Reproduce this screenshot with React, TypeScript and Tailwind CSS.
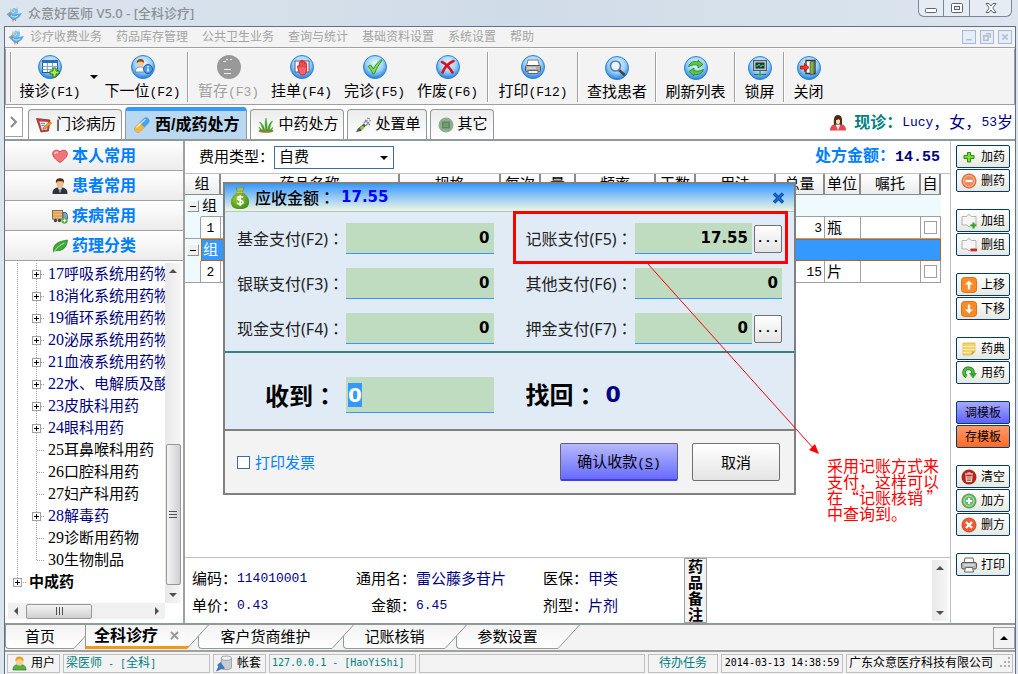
import { useState, type ReactNode } from 'react';
import clsx from 'clsx';

const MONO = "font-['Liberation_Mono','Noto_Sans_CJK_SC',monospace]";

const MENUS = ['诊疗收费业务', '药品库存管理', '公共卫生业务', '查询与统计', '基础资料设置', '系统设置', '帮助'];

type TreeItem = { no?: string; name: string; branch?: boolean; root?: boolean; last?: boolean };

const TREE: TreeItem[] = [
  { no: '17', name: '呼吸系统用药物', branch: true },
  { no: '18', name: '消化系统用药物', branch: true },
  { no: '19', name: '循环系统用药物', branch: true },
  { no: '20', name: '泌尿系统用药物', branch: true },
  { no: '21', name: '血液系统用药物', branch: true },
  { no: '22', name: '水、电解质及酸', branch: true },
  { no: '23', name: '皮肤科用药', branch: true },
  { no: '24', name: '眼科用药', branch: true },
  { no: '25', name: '耳鼻喉科用药' },
  { no: '26', name: '口腔科用药' },
  { no: '27', name: '妇产科用药' },
  { no: '28', name: '解毒药', branch: true },
  { no: '29', name: '诊断用药物' },
  { no: '30', name: '生物制品', last: true },
  { name: '中成药', branch: true, root: true },
];

/* ---------- icons ---------- */

function Svg({ size = 16, box = 16, children }: { size?: number; box?: number; children: ReactNode }) {
  return (
    <svg width={size} height={size} viewBox={`0 0 ${box} ${box}`} className="shrink-0" aria-hidden="true">
      {children}
    </svg>
  );
}

function Gradients() {
  return (
    <svg width="0" height="0" className="absolute" aria-hidden="true">
      <defs>
        <radialGradient id="ball" cx="0.5" cy="0.35" r="0.65">
          <stop offset="0" stopColor="#e8f6ff" />
          <stop offset="0.55" stopColor="#9fd2f8" />
          <stop offset="1" stopColor="#1f7fdc" />
        </radialGradient>
        <linearGradient id="tab" x1="0" y1="0" x2="0" y2="1">
          <stop offset="0" stopColor="#f3f3f3" />
          <stop offset="1" stopColor="#ffffff" />
        </linearGradient>
        <radialGradient id="green" cx="0.4" cy="0.4" r="0.7">
          <stop offset="0" stopColor="#9ccf3c" />
          <stop offset="1" stopColor="#3f8a12" />
        </radialGradient>
      </defs>
    </svg>
  );
}

const BirdIcon = () => (
  <Svg>
    <path d="M.5 8 4 6.500l1.500 1.500h5L16 7l-2.500 4-4.500 3H6.500L3.500 11z" fill="#58a9e4" />
    <circle cx="8" cy="4.800" r="4" fill="#7cc0ee" />
    <path d="M5 3.500C6 .8 9.500.5 10.500 2.500" stroke="#d7effc" strokeWidth="1.500" fill="none" />
    <circle cx="7" cy="5" r="1.600" fill="#fff" />
    <circle cx="7" cy="5" r=".7" fill="#234" />
    <path d="m2.500 6.300 4 .2-2 2z" fill="#ee7a2b" />
    <path d="M7 13v2.500M9.500 13v2" stroke="#ee7a2b" />
    <path d="M5 9.500c2 2 5 2 7 0" stroke="#dff2ff" fill="none" />
  </Svg>
);

function Ball({ children }: { children: ReactNode }) {
  return (
    <Svg size={24} box={24}>
      <circle cx="12" cy="12" r="11.500" fill="url(#ball)" stroke="#2b83d6" />
      {children}
    </Svg>
  );
}

const RegisterIcon = () => (
  <Ball>
    <rect x="4.500" y="5.500" width="15" height="12" fill="#fff" stroke="#23589c" />
    <path d="M4 5h16v3H4z" fill="#2f6cb8" />
    <path d="M4.500 11.500h15M4.500 14.500h15M9.500 8v9M14.500 8v9" stroke="#7ba5d6" />
    <path d="M15 13h3v3h3v3h-3v3h-3v-3h-3v-3h3z" fill="#a9f038" stroke="#287a0e" />
  </Ball>
);
const NextIcon = () => (
  <Ball>
    <path d="M4.500 17c0-4 2-5 5-5s4.500 1 4.500 5z" fill="#fff" stroke="#6a8db5" />
    <circle cx="9.500" cy="8" r="3.600" fill="#f3c89a" />
    <path d="M5.700 8c-.5-5 7.500-5.500 7.500-.5-2-.5-3-1-4-1-1 0-2 1-3.500 1.500z" fill="#8a4a13" />
    <circle cx="17" cy="14" r="4.500" fill="#4f9be4" stroke="#1b5fae" />
    <path d="M17 11v1.500M17 13.500v3" stroke="#fff" strokeWidth="1.500" />
  </Ball>
);
const HoldIcon = () => (
  <Svg size={24} box={24}>
    <circle cx="12" cy="12" r="12" fill="#999" />
    <path d="M7 14.500h7M7 18.500h7M6 6.500h2M9 4.500h2M13 4.500h2M8 6.500h1" stroke="#eee" />
  </Svg>
);
const HandIcon = () => (
  <Ball>
    <path d="M5 6h14v11H5z" fill="#fff" stroke="#54606e" />
    <path
      d="M9 17 7.500 12c-.3-1.500 1.300-1.800 1.800-.5V7.500c0-1.300 1.700-1.300 1.700 0V6c0-1.400 1.900-1.400 1.900 0v1c0-1.300 1.900-1.300 1.900 0v1.500c0-1.200 1.800-1.200 1.800 0V15c0 3-1.500 5-4 5-2 0-2.900-1.300-3.600-3z"
      fill="#f7646a"
      stroke="#d81f2c"
    />
    <path d="M11 7.500v5M12.900 7v5.500M14.800 8v5" stroke="#d81f2c" strokeWidth=".7" />
  </Ball>
);
const DoneIcon = () => (
  <Ball>
    <path d="m5 11.500 2.500-1.500 2.800 4C12 10.500 14.500 7.500 18.500 4.500l.5 1c-3 3.500-5.500 8-7.500 13H9.700C8.500 15.500 7 13.500 5 11.500z" fill="#7ee04c" stroke="#2b9420" />
  </Ball>
);
const VoidIcon = () => (
  <Ball>
    <path d="M6 7c3 1 8 6 10.500 10.500M17.500 6C13 8 8.500 12.500 6.500 17.500" stroke="#d8131b" strokeWidth="2.600" strokeLinecap="round" fill="none" />
  </Ball>
);
const PrintShape = () => (
  <>
    <path d="M7 5h10l1.500 6h-13z" fill="#fff" stroke="#777" />
    <rect x="4.500" y="10.500" width="15" height="6" rx="1" fill="#a9adb2" stroke="#555" />
    <path d="M7 15.500h10v3H7z" fill="#f4f4f4" stroke="#666" />
    <path d="M6 13h9" stroke="#eee" />
    <path d="M17 12.500h1.500" stroke="#ff9c2b" />
  </>
);
const FindIcon = () => (
  <Ball>
    <path d="m14 14 5 4.500" stroke="#444" strokeWidth="2.600" strokeLinecap="round" />
    <circle cx="10.500" cy="10" r="5" fill="#e9f6ff" stroke="#5a7fae" strokeWidth="1.700" />
  </Ball>
);
const RefreshIcon = () => (
  <Ball>
    <path d="M4.500 10.500C6 6 10 4.500 14 6V4l5 4.500-5 3.500v-2.500c-3-1.200-6-.7-9.500 1z" fill="#58c843" stroke="#237f1d" strokeWidth=".8" />
    <path d="M19.500 13.500c-1.500 4.500-5.500 6-9.500 4.500v2L5 15.500 10 12v2.500c3 1.200 6 .7 9.500-1z" fill="#58c843" stroke="#237f1d" strokeWidth=".8" />
  </Ball>
);
const LockIcon = () => (
  <Ball>
    <rect x="5.500" y="4.500" width="13" height="10" fill="#b9c0c4" stroke="#4d585f" />
    <path d="M7.500 6.500h9v6h-9z" fill="#173a33" />
    <path d="M8 10h2l1-2 2 3 1-2 2 .5" stroke="#58e39a" fill="none" strokeWidth=".8" />
    <path d="M12 15v2M6 18.500h12" stroke="#4d585f" />
    <circle cx="12" cy="18.300" r="1.600" fill="#2fb83a" />
  </Ball>
);
const ExitIcon = () => (
  <Ball>
    <path d="M9 4.500h9v13H9z" fill="#fff" stroke="#333" strokeWidth="1.300" />
    <path d="m13 6 4-1.200v13l-4 1.200z" fill="#7cb648" stroke="#333" strokeWidth=".6" />
    <path d="M3.500 10h4V7.500l4.500 4-4.500 4V13h-4z" fill="#f5391f" stroke="#a90e05" strokeWidth=".8" />
  </Ball>
);

const RecordIcon = () => (
  <Svg>
    <path d="M.5 1.500 14 3l-1.500 11-7.500 1z" fill="#d23b3b" stroke="#7e2020" strokeWidth=".7" />
    <path d="m3.500 4.500 8.500.5-1 7.500-5 .8z" fill="#dfeaf8" />
    <path d="M5 6.500h4M5.500 8.500h3" stroke="#6a8fc0" />
    <path d="m7.500 10.500 6.500-6 1.700 1.700-6.500 5.600-2.200.6z" fill="#f4a623" stroke="#95570c" strokeWidth=".6" />
  </Svg>
);
const PillIcon = () => (
  <Svg size={18} box={18}>
    <path d="M5 13 13 5" stroke="#4ba0ea" strokeWidth="7" strokeLinecap="round" />
    <path d="M5 13 9 9" stroke="#f6b63c" strokeWidth="7" />
    <circle cx="5" cy="13" r="3.500" fill="#f6b63c" />
    <path d="M4 11 12 3.500" stroke="#fff" strokeOpacity=".7" strokeWidth="1.500" strokeLinecap="round" />
  </Svg>
);
const GrassIcon = () => (
  <Svg>
    <ellipse cx="8" cy="14" rx="7.500" ry="1.800" fill="#a9713d" />
    <path d="M7 14C6 8 3.500 6 1.500 5 4 9 4.500 12 5 14zM8 14c-1.500-5-1-10 0-13 1 4 1.500 9 1 13zM9.500 14c.5-5 2.500-9 5-10-2 3-2.500 7-3 10zM4 14c-.5-2-1.500-3-3-4 1 2 1 3 1.500 4zM12 14c.5-2 1.500-3 3-3.500-1 1.500-1 2.500-1 3.500z" fill="#43a32f" stroke="#43a32f" strokeWidth=".5" />
  </Svg>
);
const SyringeIcon = () => (
  <Svg>
    <path d="m1 15 2-3.500 6-5 2 2-5 5.500z" fill="#4c5357" />
    <path d="m4.500 11 3-2.500 2 1.800-3 2.700z" fill="#7fd42c" />
    <path d="m8.500 6 4-3M11 8.500l3-3.500M10 3l5 5M12 1l3 1M14 4l2-.5" stroke="#8b9094" strokeWidth="1.200" />
  </Svg>
);
const OtherIcon = () => (
  <Svg>
    <circle cx="8" cy="8" r="7.500" fill="#8fae90" />
    <rect x="4" y="4.500" width="8" height="7" fill="#5c8a5e" />
    <rect x="5.500" y="6" width="5" height="4" fill="#6f9c70" />
  </Svg>
);
const WomanIcon = () => (
  <Svg>
    <path d="M0 15.500c0-5 3-6 5.500-6.500h5c2.500.5 5.500 1.500 5.500 6.500z" fill="#e8474f" />
    <path d="m5.500 9 2.500 6.500L10.500 9z" fill="#d9eefb" />
    <path d="M4 10C3.500 4 4 0 8 0s4.500 4 4 10l-2-.5h-4z" fill="#4b2c15" />
    <path d="M6 5c1 .2 2-.5 2.500-1 .5.600 1 1 1.500 1v2.500c-.5 2-3.500 2-4 0z" fill="#fbd9b5" />
  </Svg>
);

const HeartIcon = () => (
  <Svg>
    <path d="M8 14.500C3 11 .5 8.500.7 5.500.9 2 5.500 1 8 4c2.500-3 7.100-2 7.300 1.500.2 3-2.300 5.500-7.300 9z" fill="#f4747a" stroke="#d2494f" />
    <path d="M3 6c0-1.500 1.500-2.200 3-1.500" stroke="#ffd4d4" strokeWidth="1.500" fill="none" />
  </Svg>
);
const ManIcon = () => (
  <Svg>
    <path d="M.5 16c0-5 2-5.500 5-6.500h5c3 1 5 1.500 5 6.500z" fill="#2f3338" />
    <path d="m6 9.500 2 5.500 2-5.500z" fill="#fff" />
    <path d="M8 10.500 7.200 12l.8 3 .8-3z" fill="#3a76c8" />
    <ellipse cx="8" cy="5.500" rx="3.500" ry="4.200" fill="#f0bd85" />
    <path d="M4 5.500C3.500 1 5.500.3 8 .3s4.500.7 4 5.200c-.8-1.500-1-2-2-2.200H6c-1 .2-1.300.8-2 2.200z" fill="#45301d" />
  </Svg>
);
const TruckIcon = () => (
  <Svg>
    <rect x=".5" y="2.500" width="10" height="8.500" fill="#f1bd7a" stroke="#8a6a45" />
    <path d="M1 5h9M1 8h9" stroke="#d8893a" />
    <path d="M11 4.500h3l1.500 3V11H11z" fill="#7aa7d8" stroke="#4a6a91" />
    <circle cx="3.500" cy="12.500" r="1.700" fill="#444" />
    <circle cx="7.500" cy="12.500" r="1.700" fill="#444" />
    <circle cx="12.500" cy="12.500" r="3.200" fill="#58ae42" />
    <path d="M12.500 10.700v3.600M10.700 12.500h3.600" stroke="#fff" strokeWidth="1.200" />
  </Svg>
);
const LeafIcon = () => (
  <Svg>
    <path d="M1.500 14C.5 7 5 3.500 15.500 2c-.5 7-4.500 11.500-11.500 10.500z" fill="#3faa3a" stroke="#1e7b24" strokeWidth=".7" />
    <path d="M1.500 14.500C4.500 10 8 7 12.500 5" stroke="#b7eaa0" fill="none" />
  </Svg>
);

const PlusIcon = () => (
  <Svg>
    <path d="M6.500 3.500h3v3h3.500v3H9.500v3.500h-3V9.500H3v-3h3.500z" fill="#7be02a" stroke="#2a8a16" />
  </Svg>
);
const MinusBall = () => (
  <Svg>
    <circle cx="8" cy="8" r="7" fill="#f08a5a" stroke="#d4592a" />
    <circle cx="8" cy="8" r="5.500" fill="none" stroke="#f9b995" />
    <path d="M4.500 8h7" stroke="#fff" strokeWidth="2.200" />
  </Svg>
);
const BoxShape = () => (
  <path d="M1 3.500h4.500L8 1.500l2.500 2H15v8.500h-5L8 14l-2-2H1z" fill="#f5f5f3" stroke="#b3b3b0" />
);
const GroupAdd = () => (
  <Svg>
    <BoxShape />
    <path d="M12.500 9.500v6M9.500 12.500h6" stroke="#2da52b" strokeWidth="2.200" />
  </Svg>
);
const GroupDel = () => (
  <Svg>
    <BoxShape />
    <path d="M9.500 13h6.500" stroke="#d61f33" strokeWidth="2.600" />
  </Svg>
);
function ArrowBox({ down }: { down?: boolean }) {
  return (
    <Svg>
      <rect x=".5" y=".5" width="15" height="15" rx="3" fill="#f98a26" stroke="#e0701a" />
      <path d={down ? 'M8 12.500 4 8.500h2.800v-5h2.400v5H12z' : 'M8 3.500l4 4H9.200v5H6.800v-5H4z'} fill="#fff" />
    </Svg>
  );
}
const NoteIcon = () => (
  <Svg>
    <path d="M2 2h12v8.500L10.500 14H2z" fill="#f3d46a" stroke="#d6b140" strokeWidth=".7" />
    <path d="M2 5.500h12M2 8.500h12M2 11.500h9" stroke="#fbeeb0" />
    <path d="M14 10.500h-3.500V14z" fill="#c79f34" />
  </Svg>
);
const UseIcon = () => (
  <Svg>
    <path d="M5.500 11.500C1.500 9 2.500 3.500 7.500 3.300c3 0 4.700 2 4.500 5.200" fill="none" stroke="#1b7d1b" strokeWidth="3.600" />
    <path d="M5.500 11.500C1.500 9 2.500 3.500 7.500 3.300c3 0 4.700 2 4.500 5.200" fill="none" stroke="#4cc340" strokeWidth="2" />
    <path d="M8 8h8l-4 5.500z" fill="#31a52d" />
  </Svg>
);
const TrashIcon = () => (
  <Svg>
    <circle cx="8" cy="8" r="7.500" fill="#b32517" />
    <path d="M4 5h8M6.500 4h3M5 6.500l.5 6h5l.5-6M7 7v4.500M9 7v4.500" stroke="#fff" fill="none" />
  </Svg>
);
const AddBall = () => (
  <Svg>
    <circle cx="8" cy="8" r="7" fill="#6cb96a" stroke="#4a974b" />
    <circle cx="8" cy="8" r="5" fill="none" stroke="#b9e2b4" />
    <path d="M8 5v6M5 8h6" stroke="#fff" strokeWidth="2" />
  </Svg>
);
const DelBall = () => (
  <Svg>
    <circle cx="8" cy="8" r="7" fill="#ee5a33" stroke="#d64420" />
    <path d="m5 5 6 6M11 5l-6 6" stroke="#fff" strokeWidth="2.400" />
  </Svg>
);
const PrinterIcon = () => (
  <Svg>
    <path d="M4 1h8l1 5H3z" fill="#fff" stroke="#666" />
    <rect x=".5" y="5.500" width="15" height="6.500" rx="1.500" fill="#b4b6b9" stroke="#555" />
    <path d="M2.500 8h11" stroke="#eee" />
    <path d="M4.500 10.500h7l1 4.500h-9z" fill="#fafafa" stroke="#666" />
  </Svg>
);
const UserIcon = () => (
  <Svg size={15}>
    <path d="M1 15c0-4 2-6 7-6s7 2 7 6z" fill="#58b13c" stroke="#347a20" strokeWidth=".7" />
    <circle cx="8" cy="6" r="4" fill="#f8cf9c" />
    <path d="M3.800 6C3 1 6 .5 8 .5S13 1 12.200 6C11 4 9 3.500 8 3.500S5 4 3.800 6z" fill="#eaa325" />
  </Svg>
);
const DatabaseIcon = () => (
  <Svg size={17}>
    <path d="M5 3v9c0 2.500 9.500 2.500 9.500 0V3z" fill="#c9cdd1" stroke="#858b91" strokeWidth=".7" />
    <ellipse cx="9.700" cy="3" rx="4.800" ry="2" fill="#eef0f2" stroke="#858b91" strokeWidth=".7" />
    <path d="m.5 15 2-4-1-1.500L4 7l4 5.500-3 .5z" fill="#3a7bd0" stroke="#1e4f97" strokeWidth=".5" />
  </Svg>
);
const MoneyBagIcon = () => (
  <Svg size={26} box={26}>
    <path d="M9 3c2 1 3-1 4-1s2 1.500 4 .5L15.500 7h-5z" fill="#9cc45a" stroke="#5d8f25" strokeWidth=".6" />
    <path d="M10.500 7h5c4 3 7 6 6.500 11-.4 4.500-4 6-9 6s-8.600-1.500-9-6c-.4-5 2.500-8 6.500-11z" fill="url(#green)" />
    <path d="M16 12.500c-1-1.300-5.500-1.500-5.500.8 0 2.500 5.500 1.200 5.500 3.900 0 2.300-4.500 2.300-6 .8M13.200 10v11" stroke="#fff" strokeWidth="1.500" fill="none" />
    <path d="M10 7.500h6" stroke="#e3b74b" strokeWidth="1.200" />
  </Svg>
);

function Triangle({ dir, dark }: { dir: 'up' | 'down' | 'left' | 'right'; dark?: boolean }) {
  const paths = { up: 'M0 6 4 2l4 4z', down: 'M0 2h8L4 6z', left: 'M6 0v8L2 4z', right: 'M2 0v8l4-4z' };
  return (
    <Svg size={8} box={8}>
      <path d={paths[dir]} fill={dark ? '#000' : '#505050'} />
    </Svg>
  );
}

/* ---------- window chrome ---------- */

function TitleBar() {
  return (
    <header className="flex h-[26px] shrink-0 items-start justify-between bg-linear-to-r from-[#dce5ee] via-[#cfdbe7] to-[#dde6ef] pr-1.5 pl-1.5">
      <h1 className="flex h-[28px] items-center gap-1.5 font-['Noto_Sans','Noto_Sans_CJK_SC',sans-serif] text-[13px] font-medium text-[#8b9096]">
        <BirdIcon />
        众意好医师 V5.0 - [全科诊疗]
      </h1>
      <div className="flex h-[17px] overflow-hidden rounded-b-md border border-t-0 border-[#7c8794] bg-[#e6ecf3]">
        <button type="button" aria-label="最小化" className="flex w-[25px] items-center justify-center border-r border-[#7c8794]">
          <svg width="12" height="12" viewBox="0 0 12 12"><rect x=".5" y="6.500" width="11" height="4" rx="1" fill="#fff" stroke="#5b6370" /></svg>
        </button>
        <button type="button" aria-label="还原" className="flex w-[26px] items-center justify-center border-r border-[#7c8794]">
          <svg width="12" height="12" viewBox="0 0 12 12"><rect x=".5" y="1.500" width="11" height="9" rx="1" fill="#fff" stroke="#5b6370" /><rect x="3.500" y="4.500" width="5" height="3" fill="#dfe5ec" stroke="#5b6370" /></svg>
        </button>
        <button type="button" aria-label="关闭窗口" className="flex w-[41px] items-center justify-center">
          <svg width="12" height="12" viewBox="0 0 12 12"><path d="M1 1.500h3L6 4l2-2.500h3L7.800 6l3.200 4.500H8L6 8l-2 2.500H1L4.200 6z" fill="#fff" stroke="#5b6370" /></svg>
        </button>
      </div>
    </header>
  );
}

function MenuBar() {
  return (
    <nav className="flex h-[22px] shrink-0 items-center justify-between border-t border-b border-t-[#5f7288] border-b-[#a0a0a0] bg-[#f3f3f3] px-[3px]">
      <div className="flex items-center gap-3.5 text-xs leading-5 text-[#a3a3a3]">
        <span className="-mr-2"><BirdIcon /></span>
        {MENUS.map(m => (
          <button key={m} type="button">{m}</button>
        ))}
      </div>
      <div className="flex gap-1">
        {['M4 9h5', 'M5.500 3.500h4v4M3.500 5.500h4v4h-4z', 'm4 4 5 5M9 4 4 9'].map((d, i) => (
          <button key={d} type="button" aria-label={['最小化子窗口', '还原子窗口', '关闭子窗口'][i]}>
            <svg width="14" height="14" viewBox="0 0 13 13"><rect x=".5" y=".5" width="12" height="12" fill="#e6eefa" stroke="#a9b9d6" /><path d={d} stroke="#b3bfd3" strokeWidth="1.500" fill="none" /></svg>
          </button>
        ))}
      </div>
    </nav>
  );
}

function Tool({ label, fkey, width, disabled, children }: { label: string; fkey?: string; width: string; disabled?: boolean; children: ReactNode }) {
  return (
    <button
      type="button"
      disabled={disabled}
      className={clsx('flex shrink-0 flex-col items-center gap-0.5 pt-1 text-[15px] leading-5 whitespace-nowrap', width, disabled ? 'text-[#a0a0a0]' : 'text-black')}
    >
      {children}
      <span>
        {label}
        {fkey && <span className={clsx(MONO, 'text-[13px]')}>({fkey})</span>}
      </span>
    </button>
  );
}

const Sep = () => <span className="mx-[3px] h-[50px] w-0.5 shrink-0 border-l border-[#a0a0a0] bg-white" />;

function Toolbar() {
  return (
    <div className="flex h-[57px] shrink-0 items-center border border-t-white border-[#a0a0a0] bg-[#f3f3f3]">
      <span className="mr-px ml-1 h-[50px] w-0.5 border-l border-[#a0a0a0] bg-white" />
      <Tool label="接诊" fkey="F1" width="w-[74px]"><RegisterIcon /></Tool>
      <button type="button" aria-label="更多接诊" className="flex w-3.5 justify-center"><Triangle dir="down" dark /></button>
      <Tool label="下一位" fkey="F2" width="w-[83px]"><NextIcon /></Tool>
      <Sep />
      <Tool label="暂存" fkey="F3" width="w-[73px]" disabled><HoldIcon /></Tool>
      <Tool label="挂单" fkey="F4" width="w-[73px]"><HandIcon /></Tool>
      <Tool label="完诊" fkey="F5" width="w-[73px]"><DoneIcon /></Tool>
      <Tool label="作废" fkey="F6" width="w-[73px]"><VoidIcon /></Tool>
      <Sep />
      <Tool label="打印" fkey="F12" width="w-[82px]"><Ball><PrintShape /></Ball></Tool>
      <Sep />
      <Tool label="查找患者" width="w-[70px]"><FindIcon /></Tool>
      <Sep />
      <Tool label="刷新列表" width="w-[71px]"><RefreshIcon /></Tool>
      <Sep />
      <Tool label="锁屏" width="w-[41px]"><LockIcon /></Tool>
      <Sep />
      <Tool label="关闭" width="w-[41px]"><ExitIcon /></Tool>
    </div>
  );
}

function ChartTabs() {
  const [active, setActive] = useState('西/成药处方');
  const tabs = [
    { name: '门诊病历', icon: <RecordIcon /> },
    { name: '西/成药处方', icon: <PillIcon /> },
    { name: '中药处方', icon: <GrassIcon /> },
    { name: '处置单', icon: <SyringeIcon /> },
    { name: '其它', icon: <OtherIcon /> },
  ];
  return (
    <div className="flex h-9 shrink-0 items-end justify-between border-b-2 border-[#8f9a99] bg-white">
      <div className="flex items-end gap-[3px]">
        <button type="button" aria-label="展开" className="mr-0.5 mb-0.5 flex h-[30px] w-[18px] items-center justify-center border border-[#a0a0a0] border-l-white">
          <svg width="8" height="12" viewBox="0 0 8 12"><path d="m1 1 5 5-5 5" fill="none" stroke="#8a8a8a" strokeWidth="2" /></svg>
        </button>
        {tabs.map(t => (
          <button
            key={t.name}
            type="button"
            onClick={() => setActive(t.name)}
            className={clsx(
              'flex items-center gap-1 rounded-t border border-b-0 border-[#8f9a99] whitespace-nowrap',
              t.name === active
                ? 'h-8 border-t-4 border-t-[#3399ff] bg-[#bad8f0] px-[7px] text-base leading-5 font-bold'
                : 'h-[30px] bg-linear-to-b from-[#ececec] to-white pr-[5px] pl-[7px] text-[15px]',
            )}
          >
            {t.icon}
            <span>{t.name}</span>
          </button>
        ))}
      </div>
      <p className="flex h-8 items-center pr-0.5 text-base leading-5 text-[#000080]">
        <WomanIcon />
        <b className="ml-2 text-[#008080]">现诊：</b>
        <span className={clsx(MONO, 'text-[13px]')}>Lucy</span>，女，<span className={clsx(MONO, 'text-[13px]')}>53</span>岁
      </p>
    </div>
  );
}

/* ---------- left panel ---------- */

function TreeLines({ item }: { item: TreeItem }) {
  const x = item.root ? 4.5 : 23.5;
  return (
    <svg width="32" height="22" viewBox="0 0 32 22" className="shrink-0" aria-hidden="true">
      <g stroke="#a0a0a0" strokeDasharray="1 1" fill="none">
        <path d={item.root ? 'M4.500 0v11' : 'M4.500 0v22'} />
        {!item.root && <path d={item.last ? 'M23.500 0v11' : 'M23.500 0v22'} />}
        <path d={item.root ? 'M4 11.500h9' : 'M24 11.500h8'} />
      </g>
      {item.branch && (
        <>
          <rect x={x - 4} y="7.500" width="8" height="8" fill="#fff" stroke="#a0a0a0" />
          <path d={`M${x - 2.5} 11.500h5M${x} 9v5`} stroke="#000" />
        </>
      )}
    </svg>
  );
}

const PANEL_TABS = [
  { name: '本人常用', icon: <HeartIcon /> },
  { name: '患者常用', icon: <ManIcon /> },
  { name: '疾病常用', icon: <TruckIcon /> },
  { name: '药理分类', icon: <LeafIcon /> },
];

function SidePanel() {
  return (
    <aside className="flex w-[180px] shrink-0 flex-col border-r-2 border-[#a0a0a0] bg-white">
      {PANEL_TABS.map(p => (
        <button
          key={p.name}
          type="button"
          className="flex h-[30px] shrink-0 items-center justify-center gap-1 border-b border-[#a0a0a0] bg-linear-to-b from-white to-[#ececec] text-base leading-5 font-bold text-[#0080ff]"
        >
          {p.icon}
          {p.name}
        </button>
      ))}
      <div className="flex min-h-0 flex-1 pt-0.5 pb-1 pl-[3px]">
        <div className="flex min-w-0 flex-1 flex-col">
          <ul className="min-h-0 flex-1 overflow-hidden pl-[5px] text-[15px]">
            {TREE.map(t => (
              <li key={t.name} className={clsx('flex h-[22px] items-center whitespace-nowrap', t.branch && !t.root ? 'text-[#000080]' : 'text-black')}>
                <TreeLines item={t} />
                {t.root ? (
                  <b className="-ml-4">{t.name}</b>
                ) : (
                  <span className="pl-[3px]">
                    <span className="font-['Liberation_Serif',serif] text-base leading-5">{t.no}</span>
                    {t.name}
                  </span>
                )}
              </li>
            ))}
          </ul>
          <div className="flex h-4 shrink-0 items-center gap-1.5 bg-[#f0f0f0] px-1">
            <Triangle dir="left" />
            <span className="flex h-[15px] w-[66px] items-center justify-center gap-0.5 rounded-xs border border-[#979797] bg-linear-to-b from-[#f4f4f4] to-[#d0d0d0]">
              <i className="h-2 w-px bg-[#505050]" />
              <i className="h-2 w-px bg-[#505050]" />
              <i className="h-2 w-px bg-[#505050]" />
            </span>
            <span className="flex-1" />
            <Triangle dir="right" />
          </div>
        </div>
        <div className="mr-0.5 mb-4 flex w-4 flex-col items-center justify-between bg-linear-to-r from-[#e8e8e8] to-[#f6f6f6] py-1">
          <Triangle dir="up" />
          <span className="flex-1" />
          <span className="mb-1.5 flex h-[141px] w-[15px] flex-col items-center justify-center gap-0.5 rounded-xs border border-[#979797] bg-linear-to-r from-[#f4f4f4] to-[#d0d0d4]">
            <i className="h-px w-2 bg-[#505050]" />
            <i className="h-px w-2 bg-[#505050]" />
            <i className="h-px w-2 bg-[#505050]" />
          </span>
          <Triangle dir="down" />
        </div>
      </div>
    </aside>
  );
}

/* ---------- prescription ---------- */

const HEADERS = ['药品名称', '规格', '每次', '量', '频率', '天数', '用法', '总量', '单位', '嘱托', '自'];

function Collapse() {
  return (
    <button type="button" aria-label="折叠" className="mx-auto flex h-3 w-3 items-center justify-center border border-[#909090] border-t-white border-l-white bg-[#f0f0f0]">
      <i className="h-px w-1.5 bg-black" />
    </button>
  );
}

function PrescriptionTable() {
  const groups = [
    { no: 1, total: 3, unit: '瓶', selected: false },
    { no: 2, total: 15, unit: '片', selected: true },
  ];
  const line = 'border-r border-b border-[#a0a0a0]';
  return (
    <table className="w-[756px] table-fixed border-separate border-spacing-0 text-[15px] leading-4">
      <colgroup>
        <col className="w-4" />
        <col className="w-5" />
        <col className="w-[179px]" />
        <col className="w-[101px]" />
        <col className="w-10" />
        <col className="w-[35px]" />
        <col className="w-20" />
        <col className="w-10" />
        <col className="w-20" />
        <col className="w-[49px]" />
        <col className="w-9" />
        <col className="w-[60px]" />
        <col className="w-5" />
      </colgroup>
      <thead>
        <tr className="bg-linear-to-b from-white to-[#ebebeb]">
          <th colSpan={2} className="h-[21px] border-r-2 border-b border-[#8a8a8a] p-0 font-normal">组</th>
          {HEADERS.map(h => (
            <th key={h} className="h-[21px] border-r-2 border-b border-[#8a8a8a] p-0 font-normal whitespace-nowrap">{h}</th>
          ))}
        </tr>
      </thead>
      {groups.map(g => (
        <tbody key={g.no}>
          <tr>
            <td className="h-[22px] bg-[#effaff] p-0"><Collapse /></td>
            <td
              colSpan={12}
              className={clsx('h-[22px] p-0 pl-px', g.selected ? 'border border-[#b5651d] bg-[#3399ff] text-white' : 'border-b border-[#a0a0a0] bg-[#effaff]')}
            >
              组
            </td>
          </tr>
          <tr>
            <td className={clsx('h-[22px] bg-[#effaff] p-0', line)} />
            <td className={clsx('p-0 text-center', line)}>
              <span className={clsx(MONO, 'text-[13px]')}>{g.no}</span>
            </td>
            {HEADERS.slice(0, 7).map(h => (
              <td key={h} className={clsx('p-0', line)} />
            ))}
            <td className={clsx('p-0 pr-0.5 text-right', line)}>
              <span className={clsx(MONO, 'text-[13px]')}>{g.total}</span>
            </td>
            <td className={clsx('p-0 pl-0.5', line)}>{g.unit}</td>
            <td className={clsx('p-0', line)} />
            <td className={clsx('p-0', line)}>
              <input type="checkbox" aria-label="自备" className="mx-auto block h-[13px] w-[13px] appearance-none border border-[#a0a0a0]" />
            </td>
          </tr>
        </tbody>
      ))}
    </table>
  );
}

function Detail({ label, value, latin }: { label: string; value: string; latin?: boolean }) {
  return (
    <>
      <dt className="flex justify-end whitespace-nowrap">{label}：</dt>
      <dd className={clsx('whitespace-nowrap text-[#000080]', latin && clsx(MONO, 'text-[13px]'))}>{value}</dd>
    </>
  );
}

function DrugDetails() {
  return (
    <div className="flex h-[66px] shrink-0 border-t border-[#c0c0c0] bg-white">
      <dl className="grid w-[499px] shrink-0 grid-cols-[45px_119px_60px_127px_45px_1fr] grid-rows-[27px_27px] items-center pt-[7px] pl-[7px] text-[15px] leading-5">
        <Detail label="编码" value="114010001" latin />
        <Detail label="通用名" value="雷公藤多苷片" />
        <Detail label="医保" value="甲类" />
        <Detail label="单价" value="0.43" latin />
        <Detail label="金额" value="6.45" latin />
        <Detail label="剂型" value="片剂" />
      </dl>
      <label htmlFor="remark" className="w-[23px] shrink-0 border border-[#a0a0a0] bg-[#f3f3f3] px-[3px] text-[15px] leading-4 font-bold">
        药品备注
      </label>
      <textarea id="remark" className="min-w-0 flex-1 resize-none outline-none" />
      <div className="m-0.5 flex w-4 flex-col items-center justify-between bg-linear-to-r from-[#e8e8e8] to-[#f6f6f6] py-1">
        <Triangle dir="up" />
        <Triangle dir="down" />
      </div>
    </div>
  );
}

/* ---------- payment dialog ---------- */

const DIALOG_FONT = "font-['Noto_Sans','Noto_Sans_CJK_SC',sans-serif]";
const NUMBER_FONT = "font-['DejaVu_Sans',sans-serif]";

// the TC face centres the full-width colon
const Colon = () => <span className="font-['Noto_Sans_CJK_TC',sans-serif]">：</span>;

function PayField({ id, label, fkey, value, more }: { id: string; label: string; fkey: string; value: string; more?: boolean }) {
  return (
    <div className="flex h-[31px] items-center">
      <label htmlFor={id} className="w-[109px] shrink-0 text-base leading-6 whitespace-nowrap text-[#222]">
        {label}({fkey})<Colon />
      </label>
      <input
        id={id}
        defaultValue={value}
        className={clsx(NUMBER_FONT, 'h-[31px] min-w-0 flex-1 border-b border-[#3399ff] bg-[#c0dcc0] px-1 text-right text-[15px] font-bold outline-none')}
      />
      {more && (
        <button
          type="button"
          aria-label={`${label}明细`}
          className={clsx(MONO, 'ml-0.5 flex h-7 w-7 shrink-0 items-center justify-center rounded-xs border border-[#707070] bg-linear-to-b from-white to-[#e4e4e4] text-[13px] font-bold')}
        >
          ...
        </button>
      )}
    </div>
  );
}

function PaymentDialog() {
  return (
    <section role="dialog" aria-label="应收金额" className={clsx(DIALOG_FONT, 'absolute top-[41px] left-[38px] w-[573px] border-2 border-[#808080] bg-[#e1ebf6]')}>
      <div className="flex h-7 items-center border-b border-[#b8c4c4] bg-linear-to-b from-[#3399ff] to-[#eef6e0] pr-2 pl-0.5">
        <MoneyBagIcon />
        <h2 className="ml-0.5 text-base leading-6 font-medium">应收金额<Colon /></h2>
        <output className={clsx(NUMBER_FONT, 'ml-1.5 text-[15px] font-bold text-[#0000ff]')}>17.55</output>
        <button type="button" aria-label="关闭" className="ml-auto">
          <svg width="15" height="12" viewBox="0 0 15 12"><path d="m3 1.500 9 9M12 1.500l-9 9" stroke="#0a4fa8" strokeWidth="3.400" /><path d="m3 1.500 9 9M12 1.500l-9 9" stroke="#0e6fdc" strokeWidth="1.500" /></svg>
        </button>
      </div>
      <div className="grid grid-cols-2 gap-x-8 gap-y-3.5 border-b-2 border-[#3d8080] px-3 pt-[11px] pb-[7px]">
        <PayField id="fund" label="基金支付" fkey="F2" value="0" />
        <PayField id="account" label="记账支付" fkey="F5" value="17.55" more />
        <PayField id="bank" label="银联支付" fkey="F3" value="0" />
        <PayField id="other" label="其他支付" fkey="F6" value="0" />
        <PayField id="cash" label="现金支付" fkey="F4" value="0" />
        <PayField id="deposit" label="押金支付" fkey="F7" value="0" more />
      </div>
      <div className="grid h-[78px] grid-cols-2 items-center gap-x-8 border-b-2 border-[#808080] px-3 pt-3 pb-1 text-2xl font-bold">
        <div className="flex items-center">
          <label htmlFor="received" className="w-[109px] shrink-0 pl-7 whitespace-nowrap">收到<Colon /></label>
          <input
            id="received"
            defaultValue="0"
            autoFocus
            onFocus={e => e.currentTarget.select()}
            className={clsx(NUMBER_FONT, 'h-9 min-w-0 flex-1 border-b border-[#3399ff] bg-[#c0dcc0] px-0.5 text-xl leading-7 outline-none selection:bg-[#3399ff] selection:text-white')}
          />
        </div>
        <div className="flex items-center">
          找回<Colon />
          <output className={clsx(NUMBER_FONT, 'ml-2 text-[22px] text-[#000080]')}>0</output>
        </div>
      </div>
      <div className="flex h-[62px] items-center bg-[#f3f3f3] pr-3.5 pl-3 text-[15px]">
        <label className="flex items-center gap-[5px] text-[#0080ff]">
          <input type="checkbox" className="h-[13px] w-[13px] appearance-none border border-[#3a6ea5] bg-white" />
          打印发票
        </label>
        <button type="submit" className="ml-auto h-[38px] w-[118px] rounded-xs border border-b-2 border-[#606080] border-b-[#4040e0] bg-linear-to-b from-[#b8b8ff] to-[#6a6aff]">
          确认收款<span className={clsx(MONO, 'text-[13px]')}>(<u>S</u>)</span>
        </button>
        <button type="button" className="ml-3.5 h-[38px] w-[88px] rounded-xs border border-[#707070] bg-linear-to-b from-white to-[#e4e4e4]">
          取消
        </button>
      </div>
    </section>
  );
}

/* call-out for the on-account payment row */
function Callout() {
  return (
    <>
      <span className="pointer-events-none absolute top-[70px] left-[328px] h-[53px] w-[275px] border-3 border-[#ff0000]" />
      <svg width="172" height="191" viewBox="0 0 172 191" className="pointer-events-none absolute top-[123px] left-[463px]" aria-hidden="true">
        <path d="m0 0 166 185" stroke="#f00" fill="none" />
        <path d="m171 190-10-4 6-6z" fill="#f00" />
      </svg>
      <p className="absolute top-[316px] left-[642px] w-28 font-['Noto_Sans_CJK_SC',sans-serif] text-base leading-4 whitespace-nowrap text-[#ff0000]">
        采用记账方式来
        <br />
        支付，这样可以
        <br />
        在“记账核销 ”
        <br />
        中查询到。
      </p>
    </>
  );
}

function Prescription() {
  return (
    <main className="relative flex min-w-0 flex-1 flex-col border-r border-[#c0c0c0] bg-white">
      <div className="flex h-[33px] shrink-0 items-center border-b border-[#c0c0c0] pr-2.5 pl-3.5 text-[15px]">
        <label htmlFor="fee" className="whitespace-nowrap">费用类型：</label>
        <div className="relative">
          <select id="fee" className="h-[23px] w-[120px] appearance-none border border-[#3a6ea5] bg-white px-1 leading-5">
            <option>自费</option>
          </select>
          <span className="pointer-events-none absolute top-2 right-1.5"><Triangle dir="down" dark /></span>
        </div>
        <p className="ml-auto text-base leading-5 font-bold text-[#0080ff]">
          处方金额：<span className={clsx(MONO, 'text-[15px] text-[#000080]')}>14.55</span>
        </p>
      </div>
      <div className="min-h-0 flex-1 overflow-hidden">
        <PrescriptionTable />
      </div>
      <DrugDetails />
      <PaymentDialog />
      <Callout />
    </main>
  );
}

/* ---------- right actions ---------- */

const ACTIONS: { name: string; icon?: ReactNode; look?: string }[][] = [
  [
    { name: '加药', icon: <PlusIcon /> },
    { name: '删药', icon: <MinusBall /> },
  ],
  [
    { name: '加组', icon: <GroupAdd /> },
    { name: '删组', icon: <GroupDel /> },
  ],
  [
    { name: '上移', icon: <ArrowBox /> },
    { name: '下移', icon: <ArrowBox down /> },
  ],
  [
    { name: '药典', icon: <NoteIcon /> },
    { name: '用药', icon: <UseIcon /> },
  ],
  [
    { name: '调模板', look: 'from-[#a8a8ff] to-[#6060ff]' },
    { name: '存模板', look: 'from-[#ff9a68] to-[#ff6a20]' },
  ],
  [
    { name: '清空', icon: <TrashIcon /> },
    { name: '加方', icon: <AddBall /> },
    { name: '删方', icon: <DelBall /> },
  ],
  [{ name: '打印', icon: <PrinterIcon /> }],
];

function ActionRail() {
  return (
    <aside className="flex w-16 shrink-0 flex-col gap-[17px] bg-white pt-1 pl-[5px]">
      {ACTIONS.map(group => (
        <div key={group[0].name} className="flex flex-col gap-px">
          {group.map(a => (
            <button
              key={a.name}
              type="button"
              className={clsx(
                'flex h-[23px] w-[54px] items-center justify-center gap-1 rounded-xs border border-[#003c74] bg-linear-to-b text-xs leading-4',
                a.look ?? 'from-white to-[#e8e8e2]',
              )}
            >
              {a.icon}
              {a.name}
            </button>
          ))}
        </div>
      ))}
    </aside>
  );
}

/* ---------- bottom ---------- */

function PageTab({ name, width, layer, active }: { name: string; width: string; layer: string; active?: boolean }) {
  return (
    <div className={clsx('relative -mr-[11px] flex h-6', layer)}>
      <button
        type="button"
        className={clsx(
          'flex items-center border-l border-[#8f9a99] bg-linear-to-b from-[#f3f3f3] to-white leading-5 whitespace-nowrap',
          width,
          active ? 'justify-between border-b-3 border-b-[#f29a18] pr-2 pl-2 text-base font-bold' : 'justify-center rounded-bl border-b text-[15px]',
        )}
      >
        {name}
        {active && (
          <svg width="9" height="9" viewBox="0 0 9 9" aria-hidden="true"><path d="m1 1 7 7M8 1 1 8" stroke="#9a9a9a" strokeWidth="2" /></svg>
        )}
      </button>
      <svg width="22" height="24" viewBox="0 0 22 24" aria-hidden="true">
        <path d="M0 0h21.500L0 23.500z" fill="url(#tab)" />
        <path d="M21.500 0 0 23.500" stroke="#8f9a99" fill="none" />
        {active && <path d="M0 21h2.500L0 24z" fill="#f29a18" />}
      </svg>
    </div>
  );
}

function PageTabs() {
  return (
    <div className="flex h-[27px] shrink-0 items-start justify-between border-t-2 border-[#8f9a99] bg-[#f3f3f3]">
      <div className="flex">
        <PageTab name="首页" width="w-[69px]" layer="z-0" />
        <PageTab name="全科诊疗" width="w-[102px]" layer="z-40" active />
        <PageTab name="客户货商维护" width="w-[134px]" layer="z-30" />
        <PageTab name="记账核销" width="w-[102px]" layer="z-20" />
        <PageTab name="参数设置" width="w-[102px]" layer="z-10" />
      </div>
      <button type="button" aria-label="展开列表" className="mt-0.5 flex h-[22px] w-[22px] items-center justify-center border border-[#a0a0a0] bg-[#f3f3f3]">
        <Triangle dir="up" dark />
      </button>
    </div>
  );
}

function StatusCell({ className, children }: { className: string; children?: ReactNode }) {
  return (
    <div className={clsx('flex h-[19px] items-center gap-1 border border-[#c0c0c0] whitespace-nowrap', className)}>{children}</div>
  );
}

function StatusBar() {
  const small = "font-['DejaVu_Sans_Mono','Noto_Sans_CJK_SC',monospace] text-[10px]";
  return (
    <footer className="flex h-6 shrink-0 items-center gap-[3px] border-t-2 border-[#a0a0a0] bg-[#f3f3f3] px-0.5 text-xs leading-4">
      <StatusCell className="w-[53px] px-1"><UserIcon />用户</StatusCell>
      <StatusCell className="w-[147px] px-0.5 text-[#008080]">
        <span>梁医师<span className={small}> - [</span>全科<span className={small}>]</span></span>
      </StatusCell>
      <StatusCell className="w-[53px] px-0.5"><DatabaseIcon />帐套</StatusCell>
      <StatusCell className="w-[147px] px-0.5 text-[#008080]"><span className={small}>127.0.0.1 - [HaoYiShi]</span></StatusCell>
      <StatusCell className="min-w-0 flex-1" />
      <StatusCell className="w-[70px] justify-center text-[#008080]">待办任务</StatusCell>
      <StatusCell className="w-[122px] justify-center"><time className={small}>2014-03-13 14:38:59</time></StatusCell>
      <StatusCell className="w-[167px] justify-between pl-0.5">
        广东众意医疗科技有限公司
        <svg width="12" height="12" viewBox="0 0 12 12" aria-hidden="true">
          <path d="M8 0h2v2H8zM4 4h2v2H4zM8 4h2v2H8zM0 8h2v2H0zM4 8h2v2H4zM8 8h2v2H8z" fill="#b0b0b0" />
        </svg>
      </StatusCell>
    </footer>
  );
}

export default function App() {
  return (
    <div className="flex h-screen flex-col overflow-hidden bg-[#dce5ee] font-['Liberation_Sans','Noto_Sans_CJK_SC',sans-serif] text-black">
      <Gradients />
      <TitleBar />
      <div className="mr-0.5 ml-1 flex min-h-0 flex-1 flex-col border-x border-[#5f7288] bg-white">
        <MenuBar />
        <Toolbar />
        <ChartTabs />
        <div className="flex min-h-0 flex-1">
          <SidePanel />
          <Prescription />
          <ActionRail />
        </div>
        <PageTabs />
        <StatusBar />
      </div>
    </div>
  );
}
